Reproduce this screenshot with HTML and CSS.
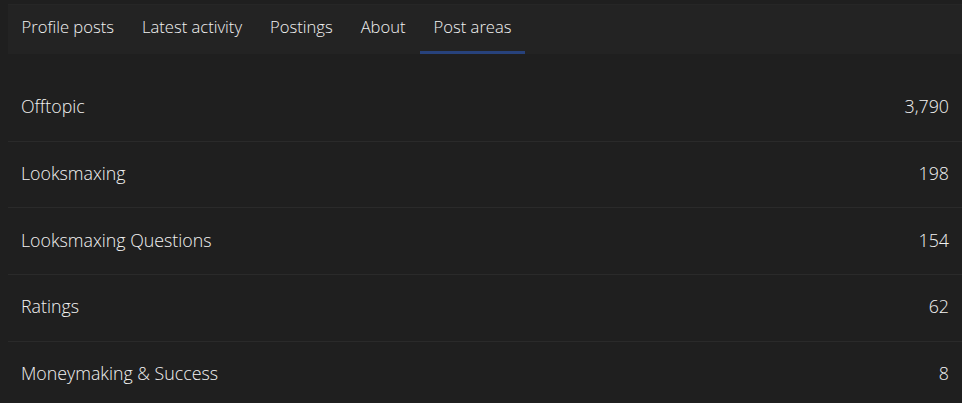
FILE: index.html
```html
<!DOCTYPE html>
<html lang="en">
<head>
  <meta charset="UTF-8">
  <meta name="viewport" content="width=device-width, initial-scale=1">
  <title>Post areas</title>
  <link rel="stylesheet" href="styles.css">
</head>
<body>
  <nav class="tabs">
    <a class="tab" href="#">Profile posts</a>
    <a class="tab" href="#">Latest activity</a>
    <a class="tab" href="#">Postings</a>
    <a class="tab" href="#">About</a>
    <a class="tab active" href="#">Post areas</a>
  </nav>

  <ul class="areas">
    <li class="area"><span class="name">Offtopic</span><span class="count">3,790</span></li>
    <li class="area"><span class="name">Looksmaxing</span><span class="count">198</span></li>
    <li class="area"><span class="name">Looksmaxing Questions</span><span class="count">154</span></li>
    <li class="area"><span class="name">Ratings</span><span class="count">62</span></li>
    <li class="area"><span class="name">Moneymaking &amp; Success</span><span class="count">8</span></li>
  </ul>
</body>
</html>
```

FILE: styles.css
```css
body {
  margin: 0;
  padding: 4px 0 0 8px;
  background-color: #1f1f1f;
  color: #f2f2f2;
  font-family: "Open Sans", "Noto Sans", sans-serif;
  font-weight: 300;
  overflow: hidden;
}
.tabs {
  display: flex;
  height: 49px;
  background-color: #232323;
  border-top: 1px solid #262626;
}
.tab {
  display: flex;
  align-items: center;
  padding: 0 14px 4px;
  color: #f2f2f2;
  text-decoration: none;
  font-size: 16.6px;
  border-bottom: 3px solid transparent;
}
.tab:first-child {
  padding-left: 13.5px;
}
.tab.active {
  border-bottom-color: #27427c;
}
.areas {
  list-style: none;
  margin: 21px 0 0;
  padding: 0;
}
.area {
  display: flex;
  justify-content: space-between;
  align-items: center;
  box-sizing: border-box;
  height: 66.67px;
  padding: 0 13px 3px;
  font-size: 17.8px;
  border-bottom: 1px solid #2a2a2a;
}
```
